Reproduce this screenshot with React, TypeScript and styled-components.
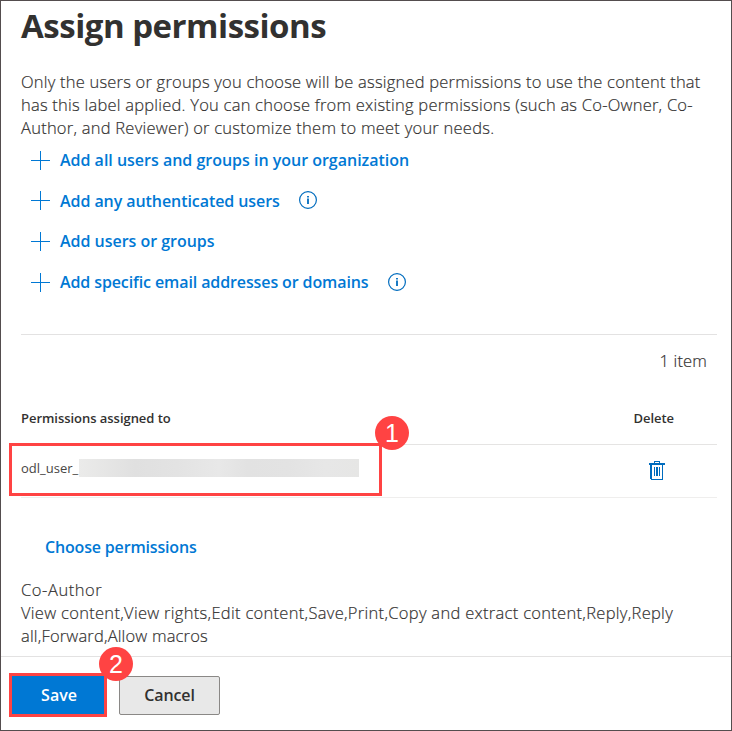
import React from 'react';
import styled, { createGlobalStyle } from 'styled-components';

const GlobalStyle = createGlobalStyle`
  *, *::before, *::after { box-sizing: border-box; }
  body { margin: 0; background: #fff; }
  button { font: inherit; }
`;

const accent = '#0078d4';
const iconBlue = '#006cbe';
const ink = '#323130';
const callout = '#ff4343';

const Panel = styled.main`
  display: flex;
  flex-direction: column;
  width: 732px;
  height: 731px;
  border: 1px solid #544d4e;
  background: #fff;
  color: ${ink};
  font-family: 'Open Sans', 'Noto Sans', sans-serif;
  overflow: hidden;
`;

const Content = styled.div`
  display: flex;
  flex-direction: column;
  flex: none;
  height: 655px;
  padding: 0 14px 0 20px;
`;

const Title = styled.h1`
  margin: 3px 0 0;
  height: 44px;
  font-size: 33px;
  line-height: 44px;
  font-weight: 700;
  letter-spacing: -0.48px;
  white-space: nowrap;
`;

const Copy = styled.p<{ $top: number }>`
  margin: ${(p) => p.$top}px 0 0;
  font-size: 16.5px;
  line-height: 23px;
  font-weight: 300;
  -webkit-text-stroke: 0.18px ${ink};
`;

const Line = styled.span<{ $track: number }>`
  display: block;
  white-space: nowrap;
  letter-spacing: ${(p) => p.$track}px;
`;

const ActionList = styled.ul`
  display: grid;
  grid-template-rows: 39px 41px 41px 41px;
  margin: 2px 0 0;
  padding: 0;
  list-style: none;
`;

const Action = styled.li`
  display: flex;
  align-items: center;
  padding-left: 10px;
`;

const ActionLink = styled.button<{ $track: number }>`
  display: flex;
  align-items: center;
  gap: 10px;
  height: 25px;
  padding: 0;
  border: 0;
  background: none;
  color: ${accent};
  font-size: 16px;
  line-height: 23px;
  font-weight: 600;
  letter-spacing: ${(p) => p.$track}px;
  white-space: nowrap;
`;

const ActionLabel = styled.span<{ $drop: number }>`
  padding-top: ${(p) => p.$drop * 2}px;
`;

const InfoSlot = styled.span`
  display: flex;
  margin: -1px 0 0 19px;
`;

const Summary = styled.div`
  display: flex;
  align-items: center;
  justify-content: flex-end;
  height: 54px;
  margin-top: 31px;
  padding: 0 10px 2px 0;
  border-top: 1px solid #e3e2e2;
  font-size: 16.5px;
  font-weight: 300;
  letter-spacing: 0.15px;
  -webkit-text-stroke: 0.18px ${ink};
`;

const Table = styled.section`
  position: relative;
  display: flex;
  flex-direction: column;
  margin-top: 4px;
`;

const HeaderRow = styled.div`
  display: flex;
  justify-content: space-between;
  height: 53px;
  padding: 16px 43px 0 0;
  border-bottom: 1px solid #e5e4e3;
  font-size: 13px;
  line-height: 20px;
  font-weight: 600;
  letter-spacing: -0.04px;
`;

const DataRow = styled.div`
  display: flex;
  align-items: center;
  height: 53px;
  padding-right: 52px;
  border-bottom: 1px solid #efeeed;
`;

const UserName = styled.span`
  width: 58px;
  margin-top: -6px;
  color: #484644;
  font-size: 13px;
  line-height: 20px;
  white-space: nowrap;
`;

const Redaction = styled.span`
  width: 280px;
  height: 18px;
  margin: -6px auto 0 0;
  background: linear-gradient(90deg, #ebebea, #e0e0e0 20%, #e3e3e3 35%, #e8e8e8 50%, #e2e2e2 60%, #e3e3e3 75%, #e7e7e7 88%, #e6e6e5);
`;

const TrashButton = styled.button`
  display: flex;
  margin-top: -1px;
  padding: 0;
  border: 0;
  background: none;
`;

const RowHighlight = styled.div`
  position: absolute;
  left: -12px;
  top: 51px;
  width: 373px;
  height: 53px;
  border: 3px solid ${callout};
`;

const StepBadge = styled.span<{ $left: number; $top: number }>`
  position: absolute;
  left: ${(p) => p.$left}px;
  top: ${(p) => p.$top}px;
  display: flex;
  align-items: center;
  justify-content: center;
  width: 34px;
  height: 34px;
  border-radius: 50%;
  background: ${callout};
  color: #fff;
  font: 400 25px/34px 'Liberation Sans', Arial, sans-serif;
`;

const ChooseButton = styled.button`
  align-self: flex-start;
  height: 24px;
  margin: 37px 0 0 24px;
  padding: 0;
  border: 0;
  background: none;
  color: ${accent};
  font-size: 16px;
  line-height: 24px;
  font-weight: 600;
  letter-spacing: -0.17px;
`;

const Footer = styled.footer`
  position: relative;
  display: flex;
  flex: 1;
  align-items: flex-start;
  gap: 12px;
  padding: 16px 0 0 8px;
  border-top: 1px solid #e3e2e2;
`;

const SaveButton = styled.button`
  width: 98px;
  height: 44px;
  padding: 0 0 1px 2px;
  border: 3px solid ${callout};
  background: ${accent};
  color: #fff;
  font-size: 16px;
  font-weight: 600;
`;

const CancelButton = styled.button`
  width: 101px;
  height: 39px;
  margin-top: 3px;
  padding: 0 0 2px;
  border: 1px solid #8a8886;
  border-radius: 2px;
  background: #e8e8e8;
  color: ${ink};
  font-size: 16px;
  font-weight: 600;
  letter-spacing: -0.1px;
`;

const PlusIcon = () => (
  <svg width="19" height="19" viewBox="0 0 19 19" fill="none" stroke={accent}>
    <path d="M9.5 0v19M0 9.5h19" />
  </svg>
);

const InfoIcon = () => (
  <svg width="18" height="18" viewBox="0 0 18 18" fill="none" stroke={iconBlue}>
    <circle cx="9" cy="9" r="8.4" strokeWidth="1.2" />
    <path d="M9 7.5v5.5M9 5v1.5" strokeWidth="1.8" />
  </svg>
);

const TrashIcon = () => (
  <svg width="16" height="19" viewBox="0 0 16 19" fill={iconBlue} shapeRendering="crispEdges">
    <path d="M5 0h6v2h-1V1H6v1H5zM0 2h16v2H0z" />
    <path d="M1 4h2v14h10V4h1v15H2v-1H1z" />
    <path d="M5 6h1v9H5zM7 6h2v9H7zM10 6h1v9h-1z" />
  </svg>
);

const actions = [
  { label: 'Add all users and groups in your organization', track: -0.01, drop: 0, info: false },
  { label: 'Add any authenticated users', track: -0.07, drop: 1, info: true },
  { label: 'Add users or groups', track: -0.02, drop: 0, info: false },
  { label: 'Add specific email addresses or domains', track: -0.11, drop: 0, info: true },
];

export default function App() {
  return (
    <>
      <GlobalStyle />
      <Panel>
        <Content>
          <Title>Assign permissions</Title>
          <Copy $top={22}>
            <Line $track={0.21}>Only the users or groups you choose will be assigned permissions to use the content that</Line>
            <Line $track={0.23}>has this label applied. You can choose from existing permissions (such as Co-Owner, Co-</Line>
            <Line $track={0.24}>Author, and Reviewer) or customize them to meet your needs.</Line>
          </Copy>
          <ActionList>
            {actions.map((a) => (
              <Action key={a.label}>
                <ActionLink $track={a.track}>
                  <PlusIcon />
                  <ActionLabel $drop={a.drop}>{a.label}</ActionLabel>
                </ActionLink>
                {a.info && (
                  <InfoSlot>
                    <InfoIcon />
                  </InfoSlot>
                )}
              </Action>
            ))}
          </ActionList>
          <Summary>1 item</Summary>
          <Table>
            <HeaderRow>
              <span>Permissions assigned to</span>
              <span>Delete</span>
            </HeaderRow>
            <DataRow>
              <UserName>odl_user_</UserName>
              <Redaction />
              <TrashButton aria-label="Delete">
                <TrashIcon />
              </TrashButton>
            </DataRow>
            <RowHighlight />
            <StepBadge $left={354} $top={24}>1</StepBadge>
          </Table>
          <ChooseButton>Choose permissions</ChooseButton>
          <Copy $top={19}>
            <Line $track={0.57}>Co-Author</Line>
            <Line $track={0.3}>View content,View rights,Edit content,Save,Print,Copy and extract content,Reply,Reply</Line>
            <Line $track={0.17}>all,Forward,Allow macros</Line>
          </Copy>
        </Content>
        <Footer>
          <SaveButton>Save</SaveButton>
          <CancelButton>Cancel</CancelButton>
          <StepBadge $left={98} $top={-10}>2</StepBadge>
        </Footer>
      </Panel>
    </>
  );
}
